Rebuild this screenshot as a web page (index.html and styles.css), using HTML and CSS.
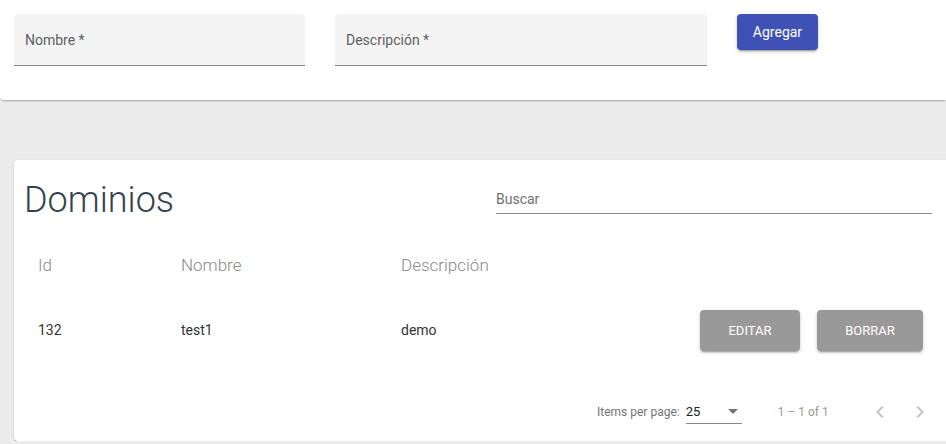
FILE: index.html
```html
<!DOCTYPE html>
<html>
<head>
<link rel="stylesheet" href="styles.css">
</head>
<body>

<div class="form-card">
    <div class="field field-nombre">
        <span class="field-label">Nombre *</span>
    </div>
    <div class="field field-desc">
        <span class="field-label">Descripción *</span>
    </div>
    <button class="btn-primary">Agregar</button>
</div>

<div class="list-card">
    <div class="list-head">
        <h1 class="list-title">Dominios</h1>
        <div class="search-field">
            <span class="search-label">Buscar</span>
        </div>
    </div>

    <div class="table">
        <div class="table-row table-header">
            <div class="cell">Id</div>
            <div class="cell">Nombre</div>
            <div class="cell">Descripción</div>
            <div class="cell"></div>
            <div class="cell"></div>
        </div>
        <div class="table-row table-data">
            <div class="cell">132</div>
            <div class="cell">test1</div>
            <div class="cell">demo</div>
            <div class="cell"><button class="btn-gray btn-edit">EDITAR</button></div>
            <div class="cell"><button class="btn-gray btn-delete">BORRAR</button></div>
        </div>
    </div>

    <div class="paginator">
        <span class="page-size-label">Items per page:</span>
        <div class="page-size-select">
            <span>25</span>
            <span class="select-arrow"></span>
        </div>
        <span class="range-label">1 – 1 of 1</span>
        <button class="page-btn">
            <svg width="24" height="24" viewBox="0 0 24 24"><path d="M15.41 7.41 14 6l-6 6 6 6 1.41-1.41L10.83 12z" fill="currentColor"/></svg>
        </button>
        <button class="page-btn">
            <svg width="24" height="24" viewBox="0 0 24 24"><path d="M10 6 8.59 7.41 13.17 12l-4.58 4.59L10 18l6-6z" fill="currentColor"/></svg>
        </button>
    </div>
</div>

</body>
</html>
```

FILE: styles.css
```css
body {
    background: #ececec;
    margin: 0;
    font-family: Roboto, "Liberation Sans", sans-serif;
    overflow: hidden;
}

.form-card {
    display: flex;
    align-items: flex-start;
    height: 100px;
    box-sizing: border-box;
    padding: 14px;
    background: #fff;
    border-radius: 0 0 0 4px;
    box-shadow: 0 2px 2px -1px rgba(0,0,0,0.2), 0 1px 3px rgba(0,0,0,0.12);
}

.field {
    height: 52px;
    box-sizing: border-box;
    background: #f4f4f4;
    border-radius: 4px 4px 0 0;
    border-bottom: 1px solid #8a8a8a;
    padding: 0 11px;
    display: flex;
    align-items: center;
}

.field-nombre {
    width: 291px;
}

.field-desc {
    width: 372px;
    margin-left: 30px;
}

.field-label {
    font-size: 14px;
    color: #5f5f5f;
}

.btn-primary {
    margin-left: 30px;
    width: 81px;
    height: 36px;
    border: none;
    border-radius: 4px;
    background: #3f51b5;
    color: #fff;
    font-family: Roboto, "Liberation Sans", sans-serif;
    font-size: 14px;
    font-weight: 400;
    box-shadow: 0 3px 1px -2px rgba(0,0,0,0.2), 0 2px 2px rgba(0,0,0,0.14), 0 1px 5px rgba(0,0,0,0.12);
}

.list-card {
    margin: 60px -10px 0 14px;
    background: #fff;
    border-radius: 4px;
    height: 281px;
    box-shadow: 0 2px 1px -1px rgba(0,0,0,0.2), 0 1px 1px rgba(0,0,0,0.14), 0 1px 3px rgba(0,0,0,0.12);
}

.list-head {
    display: flex;
    align-items: center;
    height: 80px;
    padding-left: 10px;
}

.list-title {
    margin: 0;
    width: 472px;
    font-size: 36px;
    font-weight: 300;
    color: #36434f;
    line-height: 40px;
}

.search-field {
    width: 436px;
    height: 30px;
    margin-bottom: 2px;
    box-sizing: border-box;
    border-bottom: 1px solid #8a8a8a;
    display: flex;
    align-items: center;
}

.search-label {
    font-size: 14px;
    color: #6f6f6f;
}

.table-row {
    display: grid;
    grid-template-columns: 143px 220px 299px 117px 106px;
    padding-left: 24px;
    align-items: center;
}

.table-header {
    height: 50px;
    font-size: 17px;
    font-weight: 300;
    color: #8a8a8a;
}

.table-data {
    height: 80px;
    font-size: 14px;
    color: #333;
}

.btn-gray {
    height: 41px;
    border: none;
    border-radius: 4px;
    background: #999;
    color: #fff;
    font-family: Roboto, "Liberation Sans", sans-serif;
    font-size: 13px;
    font-weight: 400;
    box-shadow: 0 3px 1px -2px rgba(0,0,0,0.2), 0 2px 2px rgba(0,0,0,0.14), 0 1px 5px rgba(0,0,0,0.12);
}

.btn-edit {
    width: 100px;
}

.btn-delete {
    width: 106px;
}

.paginator {
    display: flex;
    align-items: center;
    height: 56px;
    margin-top: 14px;
    padding-left: 583px;
    font-size: 12px;
    color: #757575;
}

.page-size-select {
    display: flex;
    align-items: center;
    justify-content: space-between;
    width: 56px;
    height: 22px;
    margin: 2px 0 0 6px;
    box-sizing: border-box;
    border-bottom: 1px solid #8a8a8a;
    color: #222;
    font-size: 13px;
    padding-bottom: 2px;
}

.select-arrow {
    width: 0;
    height: 0;
    margin-right: 4px;
    border-left: 5px solid transparent;
    border-right: 5px solid transparent;
    border-top: 5px solid #757575;
}

.range-label {
    margin-left: 36px;
    width: 82px;
    color: #999;
}

.page-btn {
    width: 40px;
    height: 40px;
    padding: 0;
    border: none;
    background: none;
    color: #c4c4c4;
    display: flex;
    align-items: center;
    justify-content: center;
}
```
